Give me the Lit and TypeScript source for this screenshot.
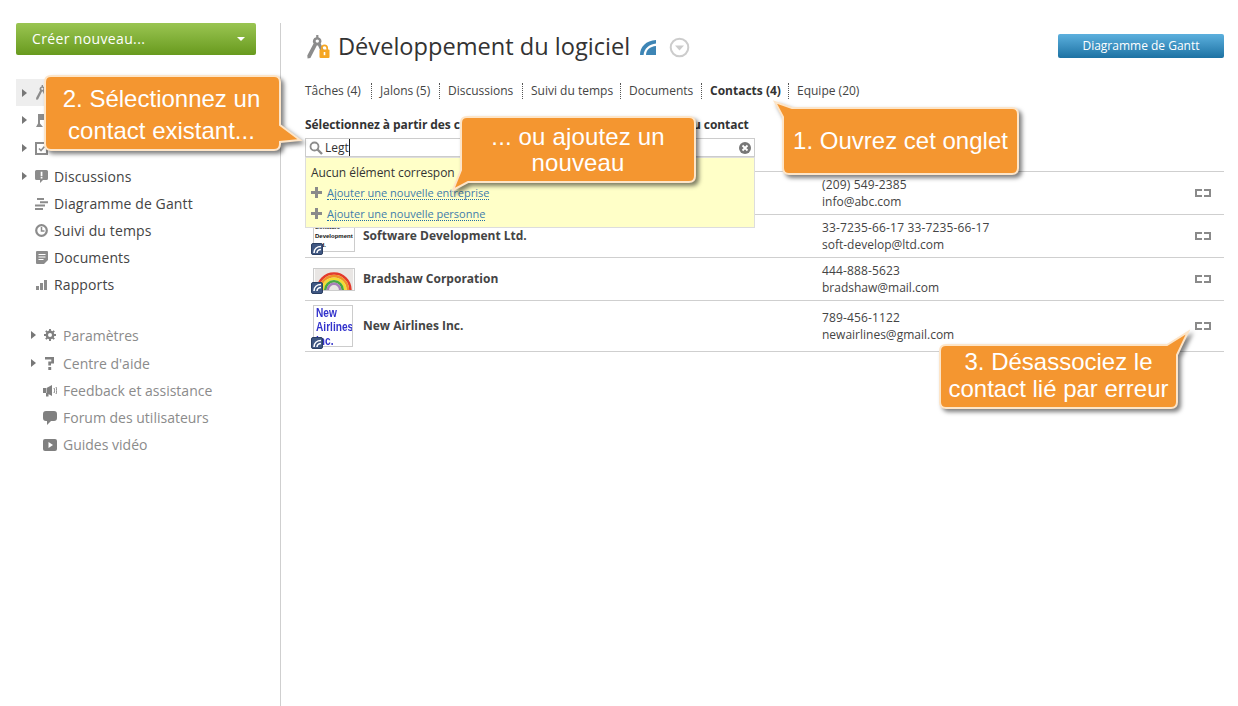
import { LitElement, html, css, svg } from "lit";
import { customElement } from "lit/decorators.js";

const ic = (w: number, h: number, body: unknown, vb = `0 0 ${w} ${h}`) =>
  html`<svg class="ic" width=${w} height=${h} viewBox=${vb}>${body}</svg>`;

const compassBody = svg`
  <path fill="#8c8c8c" fill-rule="evenodd" d="M9.200 0h2.200v2.300a4 4 0 0 1 2.300 6.300l3.300 6.800-2.800 2.200-3.200-7.200h-1.200L3.400 23 .6 23.600l-.3-3L6.600 8.600a4 4 0 0 1 2.600-6.300zM10.300 4.400a1.700 1.700 0 1 0 0 3.400 1.700 1.700 0 0 0 0-3.400z"/>`;
const icons: Record<string, unknown> = {
  compass: ic(13, 15, compassBody, "0 0 18 24"),
  flag: ic(13, 15, svg`<path fill="#8c8c8c" d="M3 1h9l-2 3 2 3H5v3.500l3 3.500H1l2-3.500z"/>`),
  task: ic(13, 13, svg`<path fill="none" stroke="#8c8c8c" stroke-width="2" d="M1 1h11v11H1z"/><path fill="none" stroke="#8c8c8c" stroke-width="1.600" d="M4 6.500l2 2 3.500-4"/>`),
  disc: ic(13, 13, svg`<path fill="#8c8c8c" d="M1.500 0h10A1.500 1.500 0 0 1 13 1.500v7A1.500 1.500 0 0 1 11.500 10H8l-3 3v-3H1.500A1.500 1.500 0 0 1 0 8.500v-7A1.500 1.500 0 0 1 1.500 0z"/><path fill="#fff" d="M5.700 1.700h1.700v4.200H5.700zM5.700 6.800h1.700v1.600H5.700z"/>`),
  gantt: ic(13, 12, svg`<path fill="#8c8c8c" d="M2 0h7v2H2zM5 3.300h8v2H5zM0 6.600h10v2H0zM0 9.900h8v2H0z"/>`),
  clock: ic(13, 13, svg`<circle cx="6.500" cy="6.500" r="5.300" fill="none" stroke="#8c8c8c" stroke-width="2.200"/><path fill="none" stroke="#8c8c8c" stroke-width="1.500" d="M6.500 3v4h3"/>`),
  doc: ic(12, 13, svg`<path fill="#8c8c8c" d="M1 0h10a1 1 0 0 1 1 1v8l-4 4H1a1 1 0 0 1-1-1V1a1 1 0 0 1 1-1z"/><path fill="#fff" d="M2.500 3h7v1h-7zM2.500 5.500h7v1h-7zM2.500 8h5v1h-5z"/>`),
  report: ic(11, 10, svg`<path fill="#8c8c8c" d="M0 6h3v4H0zM4 3h3v7H4zM8 0h3v10H8z"/>`),
  gear: ic(12, 12, svg`<circle cx="6" cy="6" r="3.200" fill="none" stroke="#808080" stroke-width="2.400"/><path stroke="#808080" stroke-width="1.900" d="M6 0v2.500M6 9.500V12M0 6h2.500M9.500 6H12M1.800 1.800l1.800 1.800M8.400 8.400l1.800 1.800M10.200 1.800L8.400 3.600M3.600 8.400l-1.800 1.800"/>`),
  help: ic(10, 13, svg`<path fill="#808080" d="M0 0h9v6.500H6v2H3.300V4.600h3V2.400H0zM3.300 10h2.900v3H3.300z"/>`),
  mega: ic(14, 13, svg`<path fill="#808080" d="M0 4h3v5H0zM3.500 4L9 1v11L3.500 9zM3 9h2.500v3.500H3z"/><path fill="none" stroke="#808080" d="M11 4c.8 1.500.8 3.500 0 5M13 3c1 2 1 5 0 7"/>`),
  bubble: ic(14, 14, svg`<path fill="#808080" d="M3 0h8a3 3 0 0 1 3 3v4a3 3 0 0 1-3 3H8l-4 4v-4H3a3 3 0 0 1-3-3V3a3 3 0 0 1 3-3z"/>`),
  video: ic(14, 12, svg`<path fill="#808080" d="M2 0h10a2 2 0 0 1 2 2v8a2 2 0 0 1-2 2H2a2 2 0 0 1-2-2V2a2 2 0 0 1 2-2z"/><path fill="#fff" d="M5.500 3l4.500 3-4.500 3z"/>`),
};

const arrow = html`<svg class="arrow" width="5" height="8" viewBox="0 0 5 8"><path fill="#777" d="M0 0l5 4-5 4z"/></svg>`;
const unlink = ic(16, 8, svg`<path fill="#8a8a8a" d="M0 0h7v2H2v4h5v2H0zM9 0h7v8H9V6h5V2H9z"/>`);
const plus = ic(11, 11, svg`<path fill="#8a8a8a" d="M4 0h3v4h4v3H7v4H4V7H0V4h4z"/>`);
const badge = html`<span class="badge"><svg width="9" height="9" viewBox="0 0 9 9"><path fill="none" stroke="#fff" stroke-width="1.600" d="M1 8c0-4 3-6.500 7-6.500M4 8c0-2 1.500-3.500 4-3.500"/></svg></span>`;

const rainbow = html`<svg class="rainpic" width="40" height="21" viewBox="0 0 42 23">
  <rect width="42" height="23" fill="#e9e6e4"/>
  <g fill="none" stroke-width="2.800">
    <path stroke="#e33b2e" d="M3 23a18 18 0 0 1 36 0"/>
    <path stroke="#f0902a" d="M5.800 23a15.200 15.200 0 0 1 30.400 0"/>
    <path stroke="#f2dc33" d="M8.600 23a12.400 12.400 0 0 1 24.800 0"/>
    <path stroke="#49a940" d="M11.400 23a9.600 9.600 0 0 1 19.200 0"/>
    <path stroke="#a77fb8" d="M14.200 23a6.800 6.800 0 0 1 13.600 0"/>
  </g>
</svg>`;

const tabs: [string, number][] = [
  ["Tâches (4)", 67],
  ["Jalons (5)", 68],
  ["Discussions", 83],
  ["Suivi du temps", 98],
  ["Documents", 81],
  ["Contacts (4)", 87],
  ["Equipe (20)", 80],
];

const callouts = [
  { cls: "c2", d: "M6 0H229Q235 0 235 6V49L255 64L235 66V68Q235 74 229 74H6Q0 74 0 68V6Q0 0 6 0Z", lines: ["2. Sélectionnez un", "contact existant..."] },
  { cls: "c0", d: "M6 0H228Q234 0 234 6V59Q234 65 228 65H7L-8 73L0 53V6Q0 0 6 0Z", lines: ["... ou ajoutez un", "nouveau"] },
  { cls: "c1", d: "M9 0H229Q235 0 235 6V60Q235 66 229 66H6Q0 66 0 60V9L-8-6Z", lines: ["1. Ouvrez cet onglet"] },
  { cls: "c3", d: "M6 0H227L248-13L237 10V57Q237 63 231 63H6Q0 63 0 57V6Q0 0 6 0Z", lines: ["3. Désassociez le", "contact lié par erreur"] },
];

@customElement("app-root")
export class AppRoot extends LitElement {
  static styles = css`
    :host { display: block; position: relative; width: 1238px; height: 706px; overflow: hidden; background: #fff; font-family: "Open Sans", sans-serif; color: #333; font-size: 12px; }
    .page { display: flex; height: 100%; }
    .side { width: 280px; box-sizing: border-box; padding: 23px 24px 0 16px; }
    .divider { width: 1px; margin-top: 23px; background: #cfcfcf; }
    .create { height: 32px; box-sizing: border-box; border-radius: 2px; padding: 0 11px 2px 16px; display: flex; align-items: center; justify-content: space-between; background: linear-gradient(#9ac552, #689a1e); color: #fff; font-size: 14px; letter-spacing: 0.36px; }
    .caret { width: 0; height: 0; border: 4px solid transparent; border-top: 4px solid #fff; border-bottom: 0; margin-top: 2px; }
    .nav { margin-top: 24px; }
    .row { height: 27px; display: flex; align-items: center; font-size: 14px; color: #444; position: relative; letter-spacing: 0.12px; }
    .row.tall { height: 28px; }
    .row.hi { background: #eee; }
    .arrow { position: absolute; left: 6px; top: 50%; margin-top: -4px; }
    .slot { width: 13px; margin-left: 19px; margin-right: 6px; display: flex; justify-content: center; align-items: center; flex: none; }
    .nav.two { margin-top: 23px; padding-left: 9px; }
    .nav.two .row { color: #8b8b8b; letter-spacing: 0; }
    .nav.two .slot { width: 14px; margin-left: 18px; }
    .main { flex: 1; padding: 0 14px 0 24px; min-width: 0; }
    .head { height: 34px; margin-top: 34px; display: flex; justify-content: space-between; align-items: flex-start; }
    .title { display: flex; align-items: center; height: 26px; }
    .title h1 { margin: 0 10px 2px 7px; font-size: 23.6px; font-weight: 400; line-height: 26px; color: #333; }
    .ttlicon { width: 24px; height: 24px; margin-left: 2px; display: flex; }
    .pulldown { margin-left: 12px; }
    .gantt { width: 166px; height: 24px; border-radius: 2px; background: linear-gradient(#5cb0de, #1d72a3); color: #fff; text-align: center; line-height: 24px; font-size: 12px; }
    .tabs { display: flex; align-items: center; height: 17px; margin-top: 14px; }
    .tab { box-sizing: border-box; padding-left: 8px; border-right: 1px dotted #555; height: 16px; line-height: 15px; color: #444; white-space: nowrap; flex: none; }
    .tab:first-child { padding-left: 0; }
    .tab:last-child { border: 0; }
    .tab.on { font-weight: 700; color: #333; }
    .label { font-weight: 700; margin-top: 17px; height: 17px; line-height: 17px; white-space: nowrap; color: #333; letter-spacing: -0.07px; }
    .searchwrap { position: relative; width: 450px; margin-top: 5px; }
    .search { height: 19px; box-sizing: border-box; border: 1px solid #ccc; display: flex; align-items: center; background: #fff; padding: 0 3px; gap: 2px; }
    .typed { flex: 1; line-height: 15px; }
    .cursor { border-right: 1px solid #222; }
    .drop { position: absolute; left: 0; right: 0; top: 19px; height: 71px; box-sizing: border-box; background: #ffffc8; border: 1px solid #ddd; padding: 6px 5px 0; z-index: 2; }
    .none { height: 17px; line-height: 17px; white-space: nowrap; letter-spacing: -0.05px; }
    .add { display: flex; align-items: center; gap: 5px; height: 21px; color: #3e7cab; font-size: 11px; }
    .add span { border-bottom: 1px dotted #1f6fa8; line-height: 13px; }
    .first { margin-top: 1px; }
    .list { width: 919px; margin-top: 14px; }
    .item { display: flex; align-items: center; border-top: 1px solid #cfcfcf; height: 43px; box-sizing: border-box; }
    .item.last { height: 52px; border-bottom: 1px solid #cfcfcf; }
    .logo { width: 42px; margin: 0 8px; flex: none; position: relative; display: flex; }
    .box { border: 1px solid #ccc; box-sizing: border-box; overflow: hidden; background: #fff; width: 100%; }
    .badge { position: absolute; left: -2px; bottom: -3px; width: 12px; height: 12px; border-radius: 2px; background: #3f5782; border: 1px solid #2b3f63; box-sizing: border-box; display: flex; align-items: center; justify-content: center; }
    .soft { height: 32px; padding: 2px 0 0 1px; font: 700 6px/9px "Liberation Sans", sans-serif; color: #111; }
    .rain { height: 23px; display: flex; }
    .airlogo { width: 40px; margin-right: 10px; }
    .airlogo .badge { bottom: -2px; }
    .air { height: 42px; padding: 0 0 0 2px; color: #3333cc; }
    .airtext { font: 700 13px/14px "Liberation Sans", sans-serif; transform: scaleX(0.78); transform-origin: left top; white-space: nowrap; }
    .name { font-weight: 700; color: #444; width: 459px; flex: none; padding-bottom: 2px; }
    .contact { flex: 1; line-height: 17px; color: #444; }
    .phone { letter-spacing: 0.15px; }
    .un { margin-right: 13px; display: flex; }
    .callout { position: absolute; z-index: 5; box-sizing: border-box; display: flex; flex-direction: column; align-items: center; justify-content: center; color: #fff; font-family: "Liberation Sans", Arial, sans-serif; font-size: 24px; white-space: nowrap; }
    .callout svg { position: absolute; inset: 0; overflow: visible; filter: drop-shadow(3px 3px 2px rgba(0,0,0,.5)); }
    .callout path { fill: #f49630; stroke: #fde5c8; stroke-width: 2; }
    .callout div { position: relative; }
    .c0 { left: 461px; top: 117px; width: 234px; height: 65px; line-height: 26px; letter-spacing: 0.15px; }
    .c1 { left: 783px; top: 108px; width: 235px; height: 66px; line-height: 28px; }
    .c2 { left: 45px; top: 76px; width: 235px; height: 74px; line-height: 32px; padding: 4px 2px 0 0; }
    .c3 { left: 940px; top: 345px; width: 237px; height: 63px; line-height: 27px; padding-bottom: 4px; }
  `;

  private navRow(icon: string, label: string, opts: { exp?: boolean; tall?: boolean; hi?: boolean } = {}) {
    return html`<div class="row ${opts.tall ? "tall" : ""} ${opts.hi ? "hi" : ""}">
      ${opts.exp ? arrow : ""}<span class="slot">${icons[icon]}</span><span>${label}</span>
    </div>`;
  }

  render() {
    return html`
      <div class="page">
        <aside class="side">
          <div class="create"><span>Créer nouveau...</span><span class="caret"></span></div>
          <div class="nav">
            ${this.navRow("compass", "", { exp: true, hi: true })}
            ${this.navRow("flag", "", { exp: true, tall: true })}
            ${this.navRow("task", "", { exp: true, tall: true })}
            ${this.navRow("disc", "Discussions", { exp: true, tall: true })}
            ${this.navRow("gantt", "Diagramme de Gantt")}
            ${this.navRow("clock", "Suivi du temps")}
            ${this.navRow("doc", "Documents")}
            ${this.navRow("report", "Rapports")}
          </div>
          <div class="nav two">
            ${this.navRow("gear", "Paramètres", { exp: true, tall: true })}
            ${this.navRow("help", "Centre d'aide", { exp: true, tall: true })}
            ${this.navRow("mega", "Feedback et assistance")}
            ${this.navRow("bubble", "Forum des utilisateurs")}
            ${this.navRow("video", "Guides vidéo")}
          </div>
        </aside>
        <div class="divider"></div>
        <main class="main">
          <div class="head">
            <div class="title">
              <span class="ttlicon">
                <svg width="24" height="24" viewBox="0 0 24 24">
                  ${compassBody}
                  <path fill="none" stroke="#f5a623" stroke-width="1.700" d="M14.800 15v-2a2.700 2.700 0 0 1 5.400 0v2"/>
                  <rect x="12.500" y="14.500" width="10" height="8.500" rx="1" fill="#f5a623"/>
                  <rect x="16.700" y="17" width="1.600" height="3.200" fill="#fff"/>
                </svg>
              </span>
              <h1>Développement du logiciel</h1>
              <svg width="17" height="15" viewBox="0 0 17 15">
                <path fill="#3d85b5" d="M0 15C0 7 6 .5 16 0v3.500C9 4 4 9 3.600 15z"/>
                <path fill="#3d85b5" d="M6 15c0-5 4-8.500 10-9v9z"/>
              </svg>
              <svg class="pulldown" width="21" height="21" viewBox="0 0 21 21">
                <circle cx="10.500" cy="10.500" r="8.800" fill="none" stroke="#ccc" stroke-width="2"/>
                <path fill="#ccc" d="M6 8.500h9l-4.500 5z"/>
              </svg>
            </div>
            <div class="gantt">Diagramme de Gantt</div>
          </div>
          <div class="tabs">
            ${tabs.map(([t, w], i) => html`<div class="tab ${i === 5 ? "on" : ""}" style="width:${w}px">${t}</div>`)}
          </div>
          <div class="label">Sélectionnez à partir des contacts existants ou ajoutez un nouveau contact</div>
          <div class="searchwrap">
            <div class="search">
              <svg width="14" height="14" viewBox="0 0 14 14"><circle cx="5.500" cy="5.500" r="4" fill="none" stroke="#8c8c8c" stroke-width="1.800"/><path stroke="#8c8c8c" stroke-width="2.400" d="M8.500 8.500l4.500 4.500"/></svg>
              <div class="typed"><span class="cursor">Legt</span></div>
              <svg width="12" height="12" viewBox="0 0 12 12"><circle cx="6" cy="6" r="6" fill="#777"/><path stroke="#fff" stroke-width="1.800" d="M3.500 3.500l5 5M8.500 3.500l-5 5"/></svg>
            </div>
            <div class="drop">
              <div class="none">Aucun élément correspon</div>
              <div class="add first">${plus}<span>Ajouter une nouvelle entreprise</span></div>
              <div class="add">${plus}<span>Ajouter une nouvelle personne</span></div>
            </div>
          </div>
          <div class="list">
            <div class="item">
              <div class="logo"></div>
              <div class="name"></div>
              <div class="contact"><div class="phone">(209) 549-2385</div><div>info@abc.com</div></div>
              <div class="un">${unlink}</div>
            </div>
            <div class="item">
              <div class="logo"><div class="box soft">Software<br />Development<br />Ltd.</div>${badge}</div>
              <div class="name">Software Development Ltd.</div>
              <div class="contact"><div class="phone">33-7235-66-17 33-7235-66-17</div><div>soft-develop@ltd.com</div></div>
              <div class="un">${unlink}</div>
            </div>
            <div class="item">
              <div class="logo"><div class="box rain">${rainbow}</div>${badge}</div>
              <div class="name">Bradshaw Corporation</div>
              <div class="contact"><div class="phone">444-888-5623</div><div>bradshaw@mail.com</div></div>
              <div class="un">${unlink}</div>
            </div>
            <div class="item last">
              <div class="logo airlogo"><div class="box air"><div class="airtext">New<br />Airlines<br />Inc.</div></div>${badge}</div>
              <div class="name">New Airlines Inc.</div>
              <div class="contact"><div class="phone">789-456-1122</div><div>newairlines@gmail.com</div></div>
              <div class="un">${unlink}</div>
            </div>
          </div>
        </main>
      </div>
      ${callouts.map(
        (c) => html`<div class="callout ${c.cls}">
          <svg width="100%" height="100%"><path d=${c.d}></path></svg>
          ${c.lines.map((l) => html`<div>${l}</div>`)}
        </div>`
      )}
    `;
  }
}
